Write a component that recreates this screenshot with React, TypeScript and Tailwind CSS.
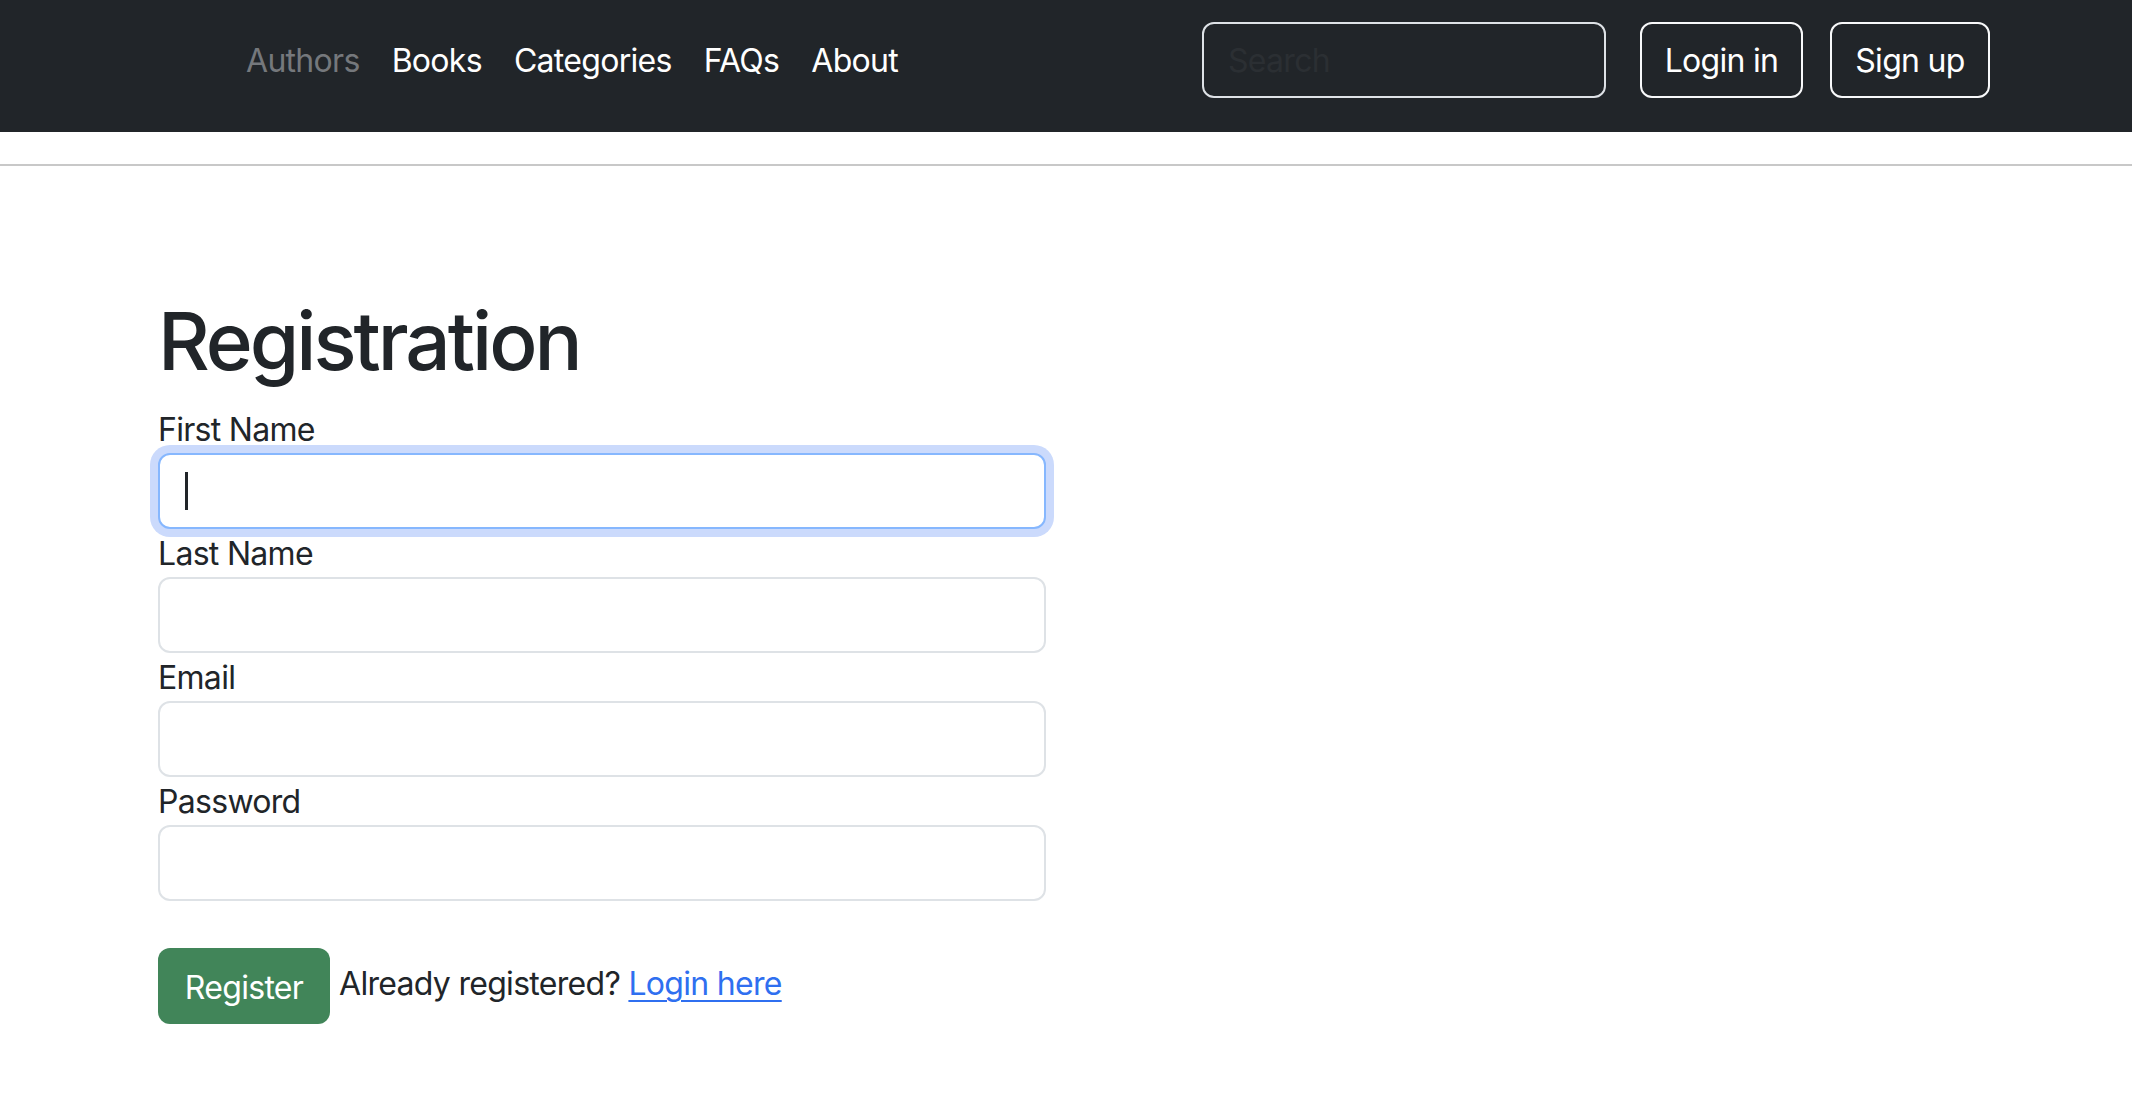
import React from "react";

export default function App() {
  const font = { fontFamily: 'Inter, "Noto Sans", sans-serif' };
  const navLinks = ["Authors", "Books", "Categories", "FAQs", "About"];
  const fields = ["First Name", "Last Name", "Email", "Password"];
  return (
    <div className="min-h-[1120px] w-[2132px] bg-white text-[#212529] tracking-[-0.7px]" style={font}>
      <nav className="h-[132px] bg-[#212529] flex items-start pt-[22px]">
        <div className="flex items-center h-[76px] pl-[230px] pt-[2px]">
          {navLinks.map((l, i) => (
            <a
              key={l}
              className={`px-[16px] text-[32px] leading-[48px] ${i === 0 ? "text-[#75787c]" : "text-white"}`}
            >
              {l}
            </a>
          ))}
        </div>
        <div className="flex-1" />
        <div className="flex items-center h-[76px] pr-[142px]">
          <input
            placeholder="Search"
            className="w-[404px] h-[76px] rounded-[12px] border-2 border-[#dee2e6] bg-[#212529] px-[24px] text-[32px] text-white placeholder:text-[#2b2f33] outline-none tracking-[-0.7px]"
          />
          <button className="ml-[34px] w-[163px] h-[76px] rounded-[12px] border-2 border-[#f8f9fa] text-[32px] text-white tracking-[-0.7px] pt-[1px]">
            Login in
          </button>
          <button className="ml-[27px] w-[160px] h-[76px] rounded-[12px] border-2 border-[#f8f9fa] text-[32px] text-white tracking-[-0.7px] pt-[1px]">
            Sign up
          </button>
        </div>
      </nav>
      <div className="mt-[32px] h-[2px] bg-[#c8c8c8]" />
      <main className="pl-[158px] pt-[127px]">
        <h1 className="text-[80px] leading-[96px] font-medium tracking-[-3px] mb-[16px]">Registration</h1>
        <div className="w-[888px]">
          {fields.map((f, i) => (
            <div key={f}>
              <label className="block text-[32px] leading-[48px] pt-[1px] -mb-[1px]">{f}</label>
              <div
                className={`relative h-[76px] rounded-[12px] border-2 bg-white ${
                  i === 0 ? "border-[#86b7fe] shadow-[0_0_0_8px_#cbdafc]" : "border-[#dee2e6]"
                }`}
              >
                {i === 0 && (
                  <div className="absolute left-[25px] top-[17px] w-[3px] h-[38px] bg-[#212529]" />
                )}
              </div>
            </div>
          ))}
        </div>
        <div className="mt-[47px] flex items-center">
          <button className="w-[172px] h-[76px] rounded-[12px] bg-[#418559] text-[32px] text-white tracking-[-0.7px] pt-[4px]">
            Register
          </button>
          <span className="ml-[9px] text-[32px] leading-[48px] -mt-[4px]">
            Already registered?{" "}
            <a className="text-[#2f6ff0] underline decoration-2 underline-offset-[5px]">Login here</a>
          </span>
        </div>
      </main>
    </div>
  );
}
